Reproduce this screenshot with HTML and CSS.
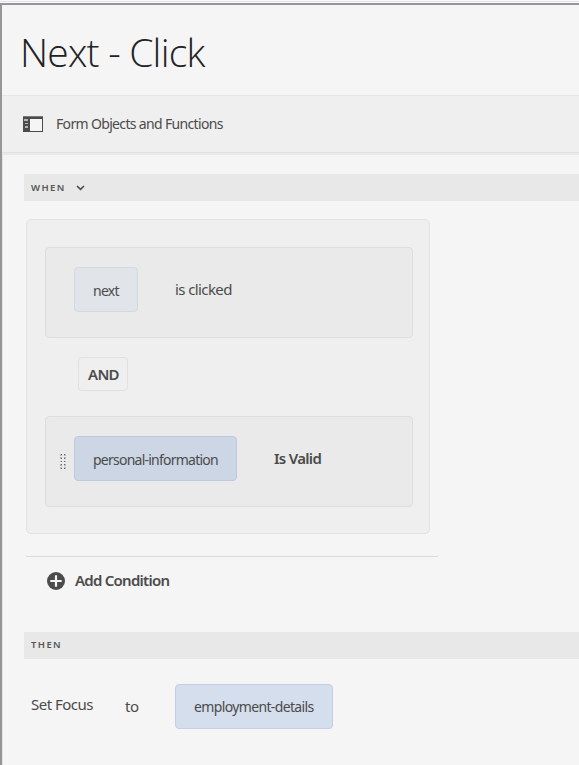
FILE: index.html
```html
<!DOCTYPE html>
<html lang="en">
<head>
<meta charset="utf-8">
<title>Rule Editor</title>
<link rel="stylesheet" href="styles.css">
</head>
<body>
<div class="editor">
  <header class="header"><h1>Next - Click</h1></header>
  <div class="toolbar">
    <svg class="rail-icon" width="20" height="16" viewBox="0 0 20 16" shape-rendering="crispEdges"><path fill="#4b4b4b" d="M0 0h20v16H0z"/><path fill="#777b77" d="M0 0h20v1H0z"/><path fill="#f5f5f5" d="M7 3h12v12H7z"/><path fill="#b5b5b5" d="M1 3h4v2H1zM2 7h3v1H2zM2 10h3v2H2z"/></svg>
    <span class="toolbar-label">Form Objects and Functions</span>
  </div>
  <main class="content">
    <div class="section"><span>WHEN</span><svg width="9" height="6" viewBox="0 0 9 6"><path d="M1 1l3.5 3.4L8 1" fill="none" stroke="#4b4b4b" stroke-width="1.6"/></svg></div>
    <div class="group">
      <div class="card">
        <span class="handle"></span>
        <div class="chip muted">next</div>
        <span class="operator">is clicked</span>
      </div>
      <button class="and">AND</button>
      <div class="card">
        <span class="handle"><svg width="6" height="15" viewBox="0 0 6 15" shape-rendering="crispEdges"><path fill="#b8b8b8" d="M0 0h2v2H0zM4 0h2v2H4zM0 3h2v2H0zM4 3h2v2H4zM0 7h2v1H0zM4 7h2v1H4zM0 10h2v2H0zM4 10h2v2H4zM0 13h2v2H0zM4 13h2v2H4z"/><path fill="#666" d="M1 0h1v1H1zM4 0h1v1H4zM1 4h1v1H1zM4 4h1v1H4zM1 7h1v1H1zM4 7h1v1H4zM1 10h1v1H1zM4 10h1v1H4zM1 14h1v1H1zM4 14h1v1H4z"/></svg></span>
        <div class="chip">personal-information</div>
        <span class="operator strong">Is Valid</span>
      </div>
    </div>
    <div class="add">
      <svg width="18" height="18" viewBox="0 0 18 18"><circle cx="9" cy="9" r="9" fill="#4b4b4b"/><path d="M9 3.3v11.4M3.3 9h11.4" stroke="#f5f5f5" stroke-width="2.2"/></svg>
      <span>Add Condition</span>
    </div>
    <div class="section"><span class="then">THEN</span></div>
    <div class="action">
      <span class="verb">Set Focus</span>
      <span class="to">to</span>
      <div class="chip target">employment-details</div>
    </div>
  </main>
</div>
</body>
</html>
```
FILE: styles.css
```css
* { box-sizing: border-box; }
body {
  margin: 0;
  height: 765px;
  padding-top: 3px;
  overflow: hidden;
  background: linear-gradient(#fafafd 0 1px, #e2e2ec 1px 2px, #fafafd 2px);
  font-family: "Noto Sans", "Open Sans", sans-serif;
  font-size: 14px;
  color: #4b4b4b;
}
.editor {
  height: 762px;
  border-top: 2px solid #969696;
  border-left: 2px solid #969696;
  background: #f5f5f5;
}
.header { height: 90px; padding: 16px 0 0 18px; }
h1 {
  margin: 0;
  font: 300 39px/62px "Open Sans", sans-serif;
  letter-spacing: -.8px;
  color: #222;
  white-space: nowrap;
}
.toolbar {
  display: flex;
  align-items: center;
  height: 60px;
  padding: 0 0 1px 21px;
  border-top: 1px solid #e6e6e6;
  border-bottom: 2px solid #e9e9e9;
  box-shadow: inset 0 -1px #e2e2e2;
  background: #efefef;
}
.toolbar-label { margin: 0 0 1px 13px; letter-spacing: -.66px; white-space: nowrap; }
.content { height: 610px; padding: 19px 0 0 21px; border-left: 1px solid #e4e4e4; }
.section {
  display: flex;
  align-items: center;
  gap: 10px;
  height: 27px;
  padding-left: 7px;
  background: #e8e8e8;
  color: #555;
  font-size: 9.5px;
  font-weight: 600;
  letter-spacing: 1.4px;
}
.section svg { margin-top: 1px; }
.then { padding-bottom: 2px; }
.group {
  width: 404px;
  height: 315px;
  margin: 18px 0 0 2px;
  padding: 27px 16px 0 18px;
  border: 1px solid #e2e2e2;
  border-radius: 5px;
  background: #efefef;
}
.card {
  display: flex;
  align-items: flex-start;
  height: 91px;
  padding-top: 19px;
  border: 1px solid #dedede;
  border-radius: 4px;
  background: #eaeaea;
}
.handle { display: flex; width: 28px; padding: 18px 0 0 14px; }
.chip {
  display: flex;
  align-items: center;
  width: 163px;
  height: 45px;
  padding: 1px 0 0 18px;
  border: 1px solid #bdc9dc;
  border-radius: 4px;
  background: #ccd6e5;
  white-space: nowrap;
  letter-spacing: -.76px;
}
.chip.muted { width: 64px; border-color: #d4d9df; background: #e1e5ea; letter-spacing: -.7px; }
.chip.target { width: 158px; border-color: #c4d0e2; background: #d5deec; letter-spacing: -.64px; }
.operator { margin: 12px 0 0 37px; font-size: 15px; line-height: 20px; letter-spacing: -.6px; white-space: nowrap; }
.strong { font-weight: 600; letter-spacing: -.7px; }
.and {
  display: flex;
  align-items: center;
  width: 50px;
  height: 34px;
  margin: 19px 0 25px 33px;
  padding: 0 0 1px 9px;
  border: 1px solid #e1e1e1;
  border-radius: 4px;
  background: #efefef;
  color: inherit;
  font: 600 15px "Noto Sans", sans-serif;
  letter-spacing: -.7px;
}
.add {
  display: flex;
  align-items: center;
  gap: 10px;
  width: 412px;
  height: 49px;
  margin: 22px 0 27px 2px;
  padding: 0 0 1px 21px;
  border-top: 1px solid #dadada;
  font-size: 15px;
  font-weight: 600;
  letter-spacing: -.75px;
}
.add svg { margin-top: 1px; }
.add span { margin-bottom: 1px; }
.action { display: flex; align-items: flex-start; margin-top: 25px; padding-left: 7px; font-size: 15px; line-height: 20px; }
.verb { width: 94px; padding-top: 10px; letter-spacing: -.5px; }
.to { width: 50px; padding-top: 12px; letter-spacing: -.4px; }
.action .chip { font-size: 14px; }
```
